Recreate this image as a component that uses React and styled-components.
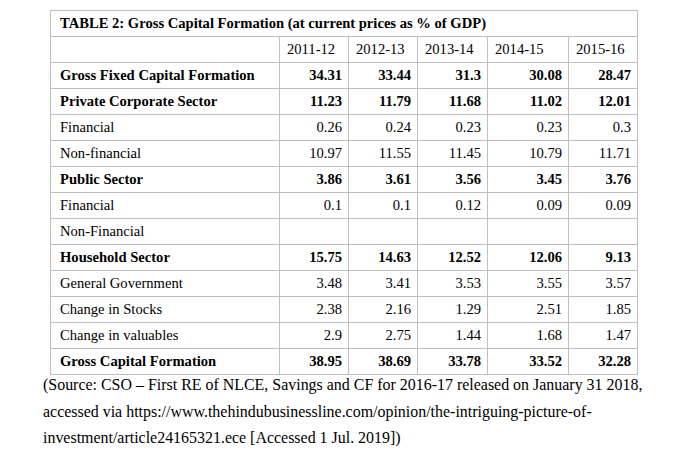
import React from 'react';
import styled, { createGlobalStyle } from 'styled-components';

const GlobalStyle = createGlobalStyle`
  html, body {
    margin: 0;
    padding: 0;
    background: #ffffff;
  }
  body {
    font-family: "Liberation Serif", "Times New Roman", serif;
    color: #000;
  }
`;

const years = ['2011-12', '2012-13', '2013-14', '2014-15', '2015-16'];

const rows = [
  { label: 'Gross Fixed Capital Formation', bold: true, values: ['34.31', '33.44', '31.3', '30.08', '28.47'] },
  { label: 'Private Corporate Sector', bold: true, values: ['11.23', '11.79', '11.68', '11.02', '12.01'] },
  { label: 'Financial', values: ['0.26', '0.24', '0.23', '0.23', '0.3'] },
  { label: 'Non-financial', values: ['10.97', '11.55', '11.45', '10.79', '11.71'] },
  { label: 'Public Sector', bold: true, values: ['3.86', '3.61', '3.56', '3.45', '3.76'] },
  { label: 'Financial', values: ['0.1', '0.1', '0.12', '0.09', '0.09'] },
  { label: 'Non-Financial', values: ['', '', '', '', ''] },
  { label: 'Household Sector', bold: true, values: ['15.75', '14.63', '12.52', '12.06', '9.13'] },
  { label: 'General Government', values: ['3.48', '3.41', '3.53', '3.55', '3.57'] },
  { label: 'Change in Stocks', values: ['2.38', '2.16', '1.29', '2.51', '1.85'] },
  { label: 'Change in valuables', values: ['2.9', '2.75', '1.44', '1.68', '1.47'] },
  { label: 'Gross Capital Formation', bold: true, values: ['38.95', '38.69', '33.78', '33.52', '32.28'] },
];

const colWidths = [229, 69, 69, 70, 81, 69];

const Page = styled.div`
  padding: 10px 0 0 43px;
  width: 650px;
`;

const Table = styled.table`
  margin-left: 7px;
  border-collapse: collapse;
  table-layout: fixed;
  width: 588px;
  font-size: 14.6px;
`;

const Cell = styled.td`
  border: 1px solid #bfbfbf;
  height: 26px;
  padding: 0 6px 0 ${p => (p.$first ? 9 : 7)}px;
  box-sizing: border-box;
  font-weight: ${p => (p.$bold ? 700 : 400)};
  text-align: ${p => p.$align || 'left'};
  white-space: nowrap;
  vertical-align: middle;
`;

const TitleCell = styled(Cell)`
  font-weight: 700;
  padding-left: 9px;
`;

const Source = styled.p`
  margin: -3px 0 0;
  font-size: 15.95px;
  line-height: 26.5px;
  width: 615px;
`;

export default function App() {
  return (
    <Page>
      <GlobalStyle />
      <Table>
        <colgroup>
          {colWidths.map((w, i) => (
            <col key={i} style={{ width: w }} />
          ))}
        </colgroup>
        <tbody>
          <tr>
            <TitleCell colSpan={6}>
              TABLE 2: Gross Capital Formation (at current prices as % of GDP)
            </TitleCell>
          </tr>
          <tr>
            <Cell $first />
            {years.map(y => (
              <Cell key={y}>{y}</Cell>
            ))}
          </tr>
          {rows.map((r, i) => (
            <tr key={i}>
              <Cell $first $bold={r.bold}>{r.label}</Cell>
              {r.values.map((v, j) => (
                <Cell key={j} $bold={r.bold} $align="right">{v}</Cell>
              ))}
            </tr>
          ))}
        </tbody>
      </Table>
      <Source>
        (Source: CSO – First RE of NLCE, Savings and CF for 2016-17 released on January 31 2018,
        accessed via https://www.thehindubusinessline.com/opinion/the-intriguing-picture-of-
        investment/article24165321.ece [Accessed 1 Jul. 2019])
      </Source>
    </Page>
  );
}
